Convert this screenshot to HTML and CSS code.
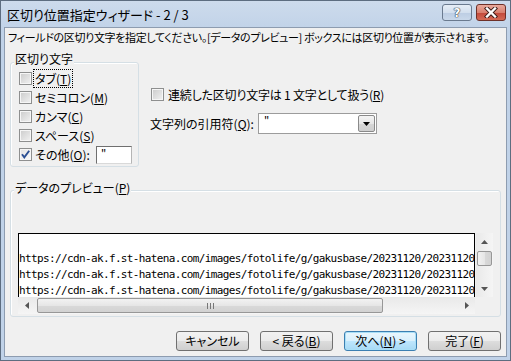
FILE: index.html
```html
<!DOCTYPE html>
<html lang="ja">

<head>
    <meta charset="UTF-8">
    <title>区切り位置指定ウィザード - 2 / 3</title>
    <link rel="stylesheet" href="styles.css">
</head>

<body>

    <div class="window">
        <div class="titlebar">
            <span class="title">区切り位置指定ウィザード - 2 / 3</span>
            <div class="caption">
                <span class="cap-btn help">?</span>
                <span class="cap-btn close">
                    <svg width="16" height="11" viewBox="0 0 16 11">
                        <path d="M4 1.5 L12 9.5 M12 1.5 L4 9.5" stroke="#3a1a16" stroke-width="4.2" stroke-linecap="square" fill="none"/>
                        <path d="M4 1.5 L12 9.5 M12 1.5 L4 9.5" stroke="#fff" stroke-width="2.4" stroke-linecap="square" fill="none"/>
                    </svg>
                </span>
            </div>
        </div>

        <div class="client">
            <p class="intro">フィールドの区切り文字を指定してください。[データのプレビュー] ボックスには区切り位置が表示されます。</p>

            <div class="options">
                <div class="group delim">
                    <div class="group-title">区切り文字</div>
                    <div class="check"><span class="box"></span><span class="focus">タブ(<u>T</u>)</span></div>
                    <div class="check"><span class="box"></span><span>セミコロン(<u>M</u>)</span></div>
                    <div class="check"><span class="box"></span><span>カンマ(<u>C</u>)</span></div>
                    <div class="check"><span class="box"></span><span>スペース(<u>S</u>)</span></div>
                    <div class="check other">
                        <span class="box checked">
                            <svg width="11" height="11" viewBox="0 0 11 11">
                                <path d="M2 5.2 L4.3 8.3 L9.2 1.8" stroke="#2b4f93" stroke-width="1.9" fill="none"/>
                            </svg>
                        </span>
                        <span>その他(<u>O</u>):</span>
                        <span class="textbox">"</span>
                    </div>
                </div>

                <div class="side">
                    <div class="check"><span class="box"></span><span>連続した区切り文字は 1 文字として扱う(<u>R</u>)</span></div>
                    <div class="quote-row">
                        <span class="quote-label">文字列の引用符(<u>Q</u>):</span>
                        <div class="combo">
                            <span class="combo-text">"</span>
                            <span class="drop">
                                <svg width="7" height="4" viewBox="0 0 7 4"><path d="M0 0 H7 L3.5 4 Z" fill="#000"/></svg>
                            </span>
                        </div>
                    </div>
                </div>
            </div>

            <div class="group preview">
                <div class="group-title">データのプレビュー(<u>P</u>)</div>
                <div class="preview-grid">
                    <div class="data">
                        <div class="line">&nbsp;</div>
                        <div class="line">https://cdn-ak.f.st-hatena.com/images/fotolife/g/gakusbase/20231120/20231120</div>
                        <div class="line">https://cdn-ak.f.st-hatena.com/images/fotolife/g/gakusbase/20231120/20231120</div>
                        <div class="line">https://cdn-ak.f.st-hatena.com/images/fotolife/g/gakusbase/20231120/20231120</div>
                    </div>
                    <div class="vscroll">
                        <span class="arrow"><svg width="7" height="4" viewBox="0 0 7 4"><path d="M0 4 H7 L3.5 0 Z" fill="#555"/></svg></span>
                        <span class="vthumb"></span>
                        <span class="fill"></span>
                        <span class="arrow"><svg width="7" height="4" viewBox="0 0 7 4"><path d="M0 0 H7 L3.5 4 Z" fill="#555"/></svg></span>
                    </div>
                    <div class="hscroll">
                        <span class="arrow"><svg width="4" height="7" viewBox="0 0 4 7"><path d="M4 0 V7 L0 3.5 Z" fill="#555"/></svg></span>
                        <span class="hthumb">
                            <svg width="7" height="6" viewBox="0 0 7 6"><path d="M0.5 0 V6 M3.5 0 V6 M6.5 0 V6" stroke="#777" stroke-width="1"/></svg>
                        </span>
                        <span class="fill"></span>
                        <span class="arrow"><svg width="4" height="7" viewBox="0 0 4 7"><path d="M0 0 V7 L4 3.5 Z" fill="#555"/></svg></span>
                    </div>
                </div>
            </div>

            <div class="buttons">
                <button>キャンセル</button>
                <button>&lt; 戻る(<u>B</u>)</button>
                <button class="default">次へ(<u>N</u>) &gt;</button>
                <button>完了(<u>F</u>)</button>
            </div>
        </div>
    </div>

</body>

</html>
```

FILE: styles.css
```css
body {
    margin: 0;
    font-family: "Noto Sans CJK JP", "Noto Sans", sans-serif;
    font-size: 12px;
    font-feature-settings: "palt";
    color: #000;
}

.window {
    width: 511px;
    height: 361px;
    box-sizing: border-box;
    border: 1px solid #5d6d80;
    background: linear-gradient(#cddbec, #c0d2e8 30px);
    display: flex;
    flex-direction: column;
}

.titlebar {
    height: 26px;
    display: flex;
    align-items: center;
    padding: 0 4px 0 6px;
}

.title {
    flex: 1;
    font-size: 13px;
    line-height: 16px;
    padding-top: 1px;
}

.caption {
    display: flex;
    gap: 4px;
    align-self: flex-start;
    margin-top: 3px;
}

.cap-btn {
    width: 30px;
    height: 17px;
    box-sizing: border-box;
    border: 1px solid #6a7a8f;
    border-radius: 3px;
    display: flex;
    align-items: center;
    justify-content: center;
}

.help {
    background: linear-gradient(#e6eef7, #d3dfee 50%, #bccde3 51%, #c9d8ea);
    font-family: "DejaVu Sans", sans-serif;
    font-weight: bold;
    font-size: 12px;
    color: #fff;
    text-shadow: 0 0 1px #2c3440, 0 0 1px #2c3440, 0 0 1px #2c3440;
}

.close {
    border-color: #6e3028;
    background: linear-gradient(#e9a99c, #d9806f 50%, #c2483a 51%, #d46a55);
}

.client {
    flex: 1;
    margin: 0 3px 3px;
    border: 1px solid #8d9cb0;
    background: #f0f0f0;
    display: flex;
    flex-direction: column;
}

.intro {
    margin: 2px 0 0 3px;
    font-size: 11px;
    letter-spacing: -0.35px;
    line-height: 15px;
    white-space: nowrap;
}

.options {
    display: flex;
    gap: 11px;
    margin: 17px 5px 0;
}

.group {
    border: 1px solid #d5dfe5;
    border-radius: 3px;
    box-shadow: inset 1px 1px 0 #fff;
}

.group-title {
    width: fit-content;
    margin-left: 3px;
    padding: 0 1px;
    line-height: 15px;
    background: #f0f0f0;
}

.delim {
    width: 129px;
    height: 105px;
    box-sizing: border-box;
}

.delim .group-title {
    margin-top: -12px;
    margin-bottom: 3px;
}

.check {
    height: 19px;
    display: flex;
    align-items: center;
    gap: 3px;
    white-space: nowrap;
}

.delim .check {
    padding: 0 6px 0 8px;
}

.box {
    width: 13px;
    height: 13px;
    box-sizing: border-box;
    flex: none;
    border: 1px solid #8e8f8f;
    background: linear-gradient(135deg, #cbcbcb, #f2f2f2);
    box-shadow: inset 0 0 0 1px #f6f6f6;
    display: flex;
    align-items: center;
    justify-content: center;
}

.box.checked {
    background: linear-gradient(135deg, #e2e2e2, #fafafa);
}

.focus {
    outline: 1px dotted #000;
    padding: 0 1px;
    margin-left: -1px;
}

.textbox {
    margin-left: auto;
    width: 36px;
    height: 18px;
    box-sizing: border-box;
    border: 1px solid #7d7d7d;
    border-color: #6f6f6f #b5b5b5 #d9d9d9 #6f6f6f;
    background: #fff;
    padding: 0 4px;
    line-height: 14px;
    font-size: 11px;
}

.side {
    padding: 23px 0 0 1px;
}

.side .check {
    gap: 4px;
    letter-spacing: -0.2px;
}

.quote-row {
    display: flex;
    align-items: center;
    margin-top: 9px;
    margin-left: -1px;
}

.quote-label {
    width: 108px;
    white-space: nowrap;
}

.combo {
    width: 119px;
    height: 21px;
    box-sizing: border-box;
    border: 1px solid #9c9c9c;
    background: #fff;
    display: flex;
    padding: 1px;
}

.combo-text {
    flex: 1;
    padding-left: 4px;
    font-size: 11px;
    line-height: 12px;
}

.drop {
    width: 17px;
    box-sizing: border-box;
    border: 1px solid #8a8a8a;
    border-radius: 2px;
    background: linear-gradient(#f4f4f4, #e6e6e6 50%, #d6d6d6 51%, #cfcfcf);
    display: flex;
    align-items: center;
    justify-content: center;
}

.preview {
    margin: 23px 5px 0;
    padding: 0 0 2px 7px;
}

.preview .group-title {
    margin-top: -11px;
    margin-left: -4px;
    margin-bottom: 38px;
}

.preview-grid {
    display: grid;
    grid-template-columns: 457px 17px;
    grid-template-rows: 64px 17px;
    column-gap: 1px;
}

.data {
    border: 1px solid #000;
    border-bottom: none;
    background: #fff;
    overflow: hidden;
    font-family: "DejaVu Sans Mono", monospace;
    font-size: 11px;
    letter-spacing: -0.63px;
    white-space: nowrap;
    font-feature-settings: normal;
}

.line {
    height: 16px;
    line-height: 17px;
}

.vscroll,
.hscroll {
    display: flex;
    background: linear-gradient(90deg, #e9e9e9, #f5f5f5);
}

.vscroll {
    flex-direction: column;
    align-items: center;
}

.hscroll {
    background: linear-gradient(#e9e9e9, #f5f5f5);
    align-items: center;
}

.arrow {
    width: 17px;
    height: 17px;
    flex: none;
    display: flex;
    align-items: center;
    justify-content: center;
}

.fill {
    flex: 1;
}

.vthumb {
    width: 15px;
    height: 15px;
    margin-top: 1px;
    box-sizing: border-box;
    border: 1px solid #979797;
    border-radius: 2px;
    background: linear-gradient(90deg, #f2f2f2, #e6e6e6 50%, #d9d9d9 51%, #d2d2d2);
}

.hthumb {
    width: 346px;
    height: 15px;
    margin-left: 2px;
    box-sizing: border-box;
    border: 1px solid #979797;
    border-radius: 2px;
    background: linear-gradient(#f2f2f2, #e6e6e6 50%, #d9d9d9 51%, #d2d2d2);
    display: flex;
    align-items: center;
    justify-content: center;
}

.buttons {
    display: flex;
    justify-content: flex-end;
    gap: 11px;
    margin: 14px 5px 0 0;
}

button {
    width: 73px;
    height: 20px;
    padding: 0;
    border: 1px solid #707070;
    border-radius: 3px;
    background: linear-gradient(#f2f2f2, #ebebeb 50%, #dddddd 51%, #cfcfcf);
    font-family: inherit;
    font-size: 12px;
    font-feature-settings: "palt";
    line-height: 16px;
    color: #000;
}

button.default {
    border-color: #3c7fb1;
    box-shadow: inset 0 0 0 1px #a9dff7;
    background: linear-gradient(#eaf6fd, #d9f0fc 50%, #bee6fd 51%, #a7d9f5);
}
```
